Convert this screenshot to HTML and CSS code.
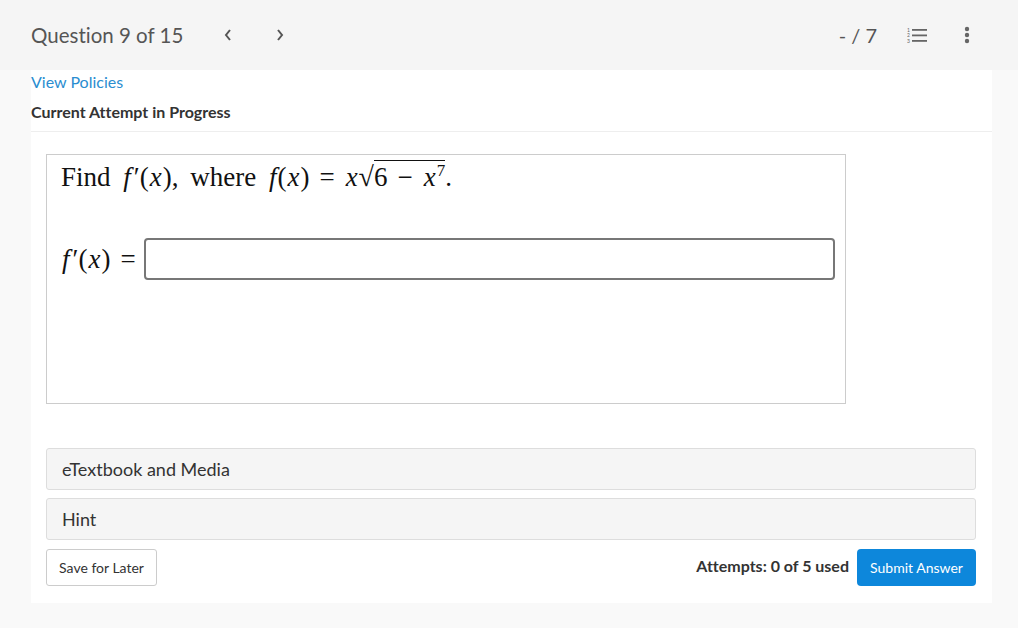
FILE: index.html
```html
<html lang="en">
<head>
  <meta charset="UTF-8">
  <title>Question 9 of 15</title>
  <link rel="stylesheet" href="styles.css">
</head>
<body>
  <div class="topBar">
    <div class="qNav">
      <span class="qTitle">Question 9 of 15</span>
      <svg class="arrow" width="10" height="14" viewBox="0 0 10 14">
        <path d="M7 2 L3 7 L7 12" fill="none" stroke="#555" stroke-width="2"/>
      </svg>
      <svg class="arrow" width="10" height="14" viewBox="0 0 10 14">
        <path d="M3 2 L7 7 L3 12" fill="none" stroke="#555" stroke-width="2"/>
      </svg>
    </div>
    <div class="qTools">
      <span class="score">- / 7</span>
      <svg class="listIcon" width="22" height="16" viewBox="0 0 22 16">
        <text x="0" y="4.5" font-size="5" font-family="Lato, sans-serif" fill="#666">1</text>
        <text x="0" y="10" font-size="5" font-family="Lato, sans-serif" fill="#666">2</text>
        <text x="0" y="15.5" font-size="5" font-family="Lato, sans-serif" fill="#666">3</text>
        <rect x="5" y="2" width="15" height="1.8" fill="#666"/>
        <rect x="5" y="7.5" width="15" height="1.8" fill="#666"/>
        <rect x="5" y="13" width="15" height="1.8" fill="#666"/>
      </svg>
      <svg class="moreIcon" width="6" height="18" viewBox="0 0 6 18">
        <circle cx="3" cy="3" r="2.2" fill="#666"/>
        <circle cx="3" cy="9" r="2.2" fill="#666"/>
        <circle cx="3" cy="15" r="2.2" fill="#666"/>
      </svg>
    </div>
  </div>

  <div class="panel">
    <a class="policies" href="#">View Policies</a>
    <div class="attempt">Current Attempt in Progress</div>

    <div class="content">
      <div class="questionBox">
        <p class="prompt">Find <i>f</i><span class="prime">&prime;</span>(<i>x</i>), where <i>f</i>(<i>x</i>)<span class="op">=</span><i>x</i><span class="sqrt">&radic;</span><span class="radicand">6<span class="op">&minus;</span><i>x</i><sup>7</sup></span>.</p>
        <div class="answerRow">
          <span class="lhs"><i>f</i><span class="prime">&prime;</span>(<i>x</i>)<span class="op">=</span></span>
          <input class="answer" type="text">
        </div>
      </div>

      <div class="resources">
        <div class="resource">eTextbook and Media</div>
        <div class="resource">Hint</div>
      </div>

      <div class="actions">
        <button class="btn saveBtn" type="button">Save for Later</button>
        <div class="submitArea">
          <span class="attempts">Attempts: 0 of 5 used</span>
          <button class="btn submitBtn" type="button">Submit Answer</button>
        </div>
      </div>
    </div>
  </div>
</body>
</html>
```

FILE: styles.css
```css
body, html {
  margin: 0;
  padding: 0;
}
body {
  font-family: Lato, "Liberation Sans", sans-serif;
  font-variant-ligatures: none;
  background-color: #f9f9f9;
  color: #333;
  width: 1018px;
  height: 628px;
}
.topBar {
  height: 70px;
  background-color: #f5f5f5;
  display: flex;
  justify-content: space-between;
  align-items: center;
  padding: 0 48px 0 31px;
  box-sizing: border-box;
}
.qNav {
  display: flex;
  align-items: center;
}
.qTitle {
  font-size: 20.5px;
  color: #555;
  margin-right: 40px;
}
.arrow {
  margin-right: 42px;
}
.qTools {
  display: flex;
  align-items: center;
}
.score {
  font-size: 20px;
  color: #555;
  margin-right: 30px;
}
.listIcon {
  margin-right: 35px;
}
.panel {
  background-color: #fff;
  margin-left: 31px;
  width: 961px;
  height: 533px;
}
.policies {
  display: block;
  font-size: 16px;
  color: #2a8dd0;
  text-decoration: none;
  padding-top: 3px;
  line-height: 18px;
}
.attempt {
  font-size: 16px;
  font-weight: bold;
  color: #333;
  padding-top: 12px;
  padding-bottom: 10px;
  line-height: 18px;
  border-bottom: 1px solid #eee;
}
.content {
  padding: 22px 16px 0 15px;
}
.questionBox {
  width: 800px;
  height: 250px;
  border: 1px solid #ccc;
  box-sizing: border-box;
  padding: 0 10px 0 14px;
  font-family: "Liberation Serif", "DejaVu Serif", serif;
  color: #111;
}
.prompt {
  margin: 0;
  padding-top: 6px;
  font-size: 27px;
  line-height: 32px;
  word-spacing: 5px;
}
.prompt i, .lhs i {
  padding: 0 1px;
}
.prime {
  margin-left: 2px;
}
.op {
  margin: 0 10px;
}
.sqrt {
  font-size: 28px;
}
.radicand {
  border-top: 1px solid #111;
  padding-top: 1px;
}
.radicand sup {
  font-size: 17px;
  line-height: 0;
}
.answerRow {
  display: flex;
  align-items: center;
  margin-top: 45px;
}
.lhs {
  font-size: 27px;
  white-space: nowrap;
  flex-shrink: 0;
  margin-right: 8px;
}
.lhs .op {
  margin-right: 0;
}
.answer {
  flex: 1;
  height: 42px;
  border: 2px solid #777;
  border-radius: 4px;
  outline: none;
  box-sizing: border-box;
}
.resources {
  margin-top: 44px;
  display: flex;
  flex-direction: column;
  gap: 8px;
}
.resource {
  height: 42px;
  box-sizing: border-box;
  background-color: #f5f5f5;
  border: 1px solid #ddd;
  border-radius: 3px;
  padding-left: 15px;
  font-size: 18px;
  color: #333;
  display: flex;
  align-items: center;
}
.actions {
  margin-top: 9px;
  display: flex;
  justify-content: space-between;
  align-items: center;
}
.btn {
  font-family: Lato, "Liberation Sans", sans-serif;
  font-size: 14px;
  height: 37px;
  border-radius: 3px;
  padding: 0;
}
.saveBtn {
  background-color: #fff;
  border: 1px solid #ccc;
  color: #333;
  width: 111px;
}
.submitArea {
  display: flex;
  align-items: center;
}
.attempts {
  font-size: 16px;
  font-weight: bold;
  color: #333;
  margin-right: 8px;
  padding-bottom: 4px;
}
.submitBtn {
  background-color: #0d87db;
  border: none;
  border-radius: 4px;
  color: #fff;
  width: 119px;
}
```
